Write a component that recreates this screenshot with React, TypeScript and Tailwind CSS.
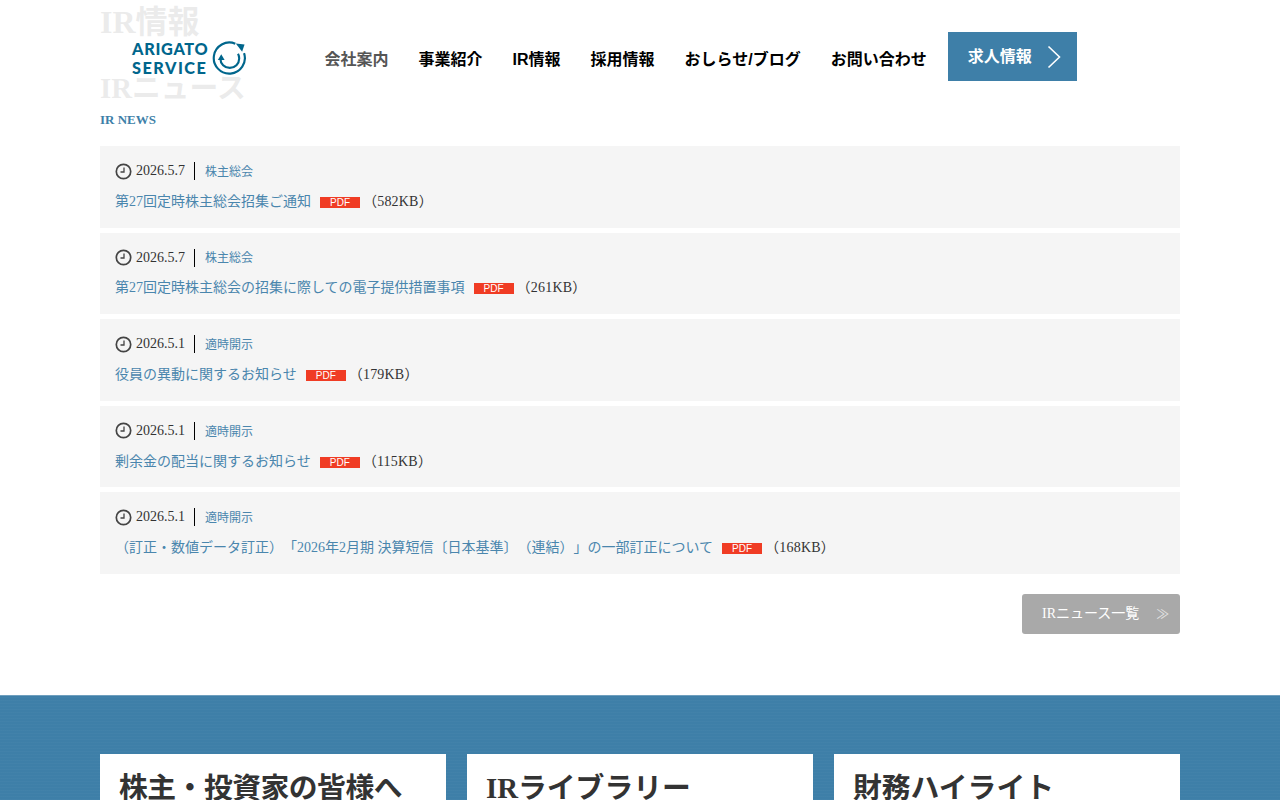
import React from "react";

const serif = "font-['Liberation_Serif','Noto_Sans_CJK_JP',serif]";

const news = [
  { date: "2026.5.7", cat: "株主総会", title: "第27回定時株主総会招集ご通知", size: "582KB" },
  { date: "2026.5.7", cat: "株主総会", title: "第27回定時株主総会の招集に際しての電子提供措置事項", size: "261KB" },
  { date: "2026.5.1", cat: "適時開示", title: "役員の異動に関するお知らせ", size: "179KB" },
  { date: "2026.5.1", cat: "適時開示", title: "剰余金の配当に関するお知らせ", size: "115KB" },
  { date: "2026.5.1", cat: "適時開示", title: "（訂正・数値データ訂正）「2026年2月期 決算短信〔日本基準〕（連結）」の一部訂正について", size: "168KB" },
];

const nav = ["会社案内", "事業紹介", "IR情報", "採用情報", "おしらせ/ブログ", "お問い合わせ"];

function Clock() {
  return (
    <svg width="17" height="17" viewBox="0 0 17 17" fill="none" className="shrink-0">
      <circle cx="8.5" cy="8.5" r="7.2" stroke="#444" strokeWidth="1.7" />
      <path d="M9 4.5V9H5.5" stroke="#444" strokeWidth="1.3" />
    </svg>
  );
}

function Logo() {
  return (
    <div className="flex items-center gap-[5px]">
      <div className="font-['Lato','Noto_Sans',sans-serif] text-[#00668c] text-[16.3px] leading-[19px] font-black tracking-[0.7px] w-[75px] whitespace-nowrap">
        <div>ARIGATO</div>
        <div className="tracking-[1.5px]">SERVICE</div>
      </div>
      <svg width="34" height="35" viewBox="0 0 35 36" fill="none">
        <path d="M24 2.800A16 16 0 1 0 33 12.500" stroke="#00668c" strokeWidth="2.2" />
        <path d="M8.600 18a9.700 9.700 0 0 0 19.400 0c0-2-.4-3.500-1.200-5" stroke="#00668c" strokeWidth="2.2" />
        <path d="M24.500 2.500L33.500 3.500L31 11z" fill="#00668c" />
        <path d="M9.500 13.500L6 19.500h7z" fill="#00668c" />
      </svg>
    </div>
  );
}

function Card({ title, tight }: { title: string; tight?: boolean }) {
  return (
    <div className="bg-white h-[60px] pl-[19px] pt-[14px] overflow-hidden">
      <div className={`text-[28.8px] leading-[40px] font-bold text-[#333] whitespace-nowrap ${tight ? "tracking-[-0.5px]" : ""}`}>{title}</div>
    </div>
  );
}

export default function App() {
  return (
    <div className={`h-[800px] overflow-hidden relative bg-white text-[#333] [text-spacing-trim:space-all] ${serif}`}>
      <header className="absolute top-0 inset-x-0 h-[105px] bg-white/90 flex items-start pl-[132px]">
        <div className="mt-[39px] w-[192.500px] shrink-0">
          <Logo />
        </div>
        <nav className="mt-[32px] flex items-start font-['Liberation_Sans','Noto_Sans_CJK_JP',sans-serif] font-bold text-[16px] text-black">
          <div className="flex gap-[30px] h-[49px] items-center pt-[7px]">
            {nav.map((n, i) => (
              <span key={n} className={i === 0 ? "text-[#555]" : ""}>{n}</span>
            ))}
          </div>
          <div className="ml-[21.500px] w-[129px] h-[49px] bg-[#3e7fa8] text-white flex items-center pl-[19.500px] pt-[1px]">
            <span>求人情報</span>
            <svg width="14" height="24" viewBox="0 0 14 24" fill="none" className="ml-[15.500px]">
              <path d="M1.500 1.500L12.500 12L1.500 22.500" stroke="white" strokeWidth="1.6" />
            </svg>
          </div>
        </nav>
      </header>

      <main className="px-[100px]">
        <h1 className="text-[32px] leading-[44px] font-bold text-[#333]">IR情報</h1>
        <h2 className="mt-[22px] text-[28.8px] leading-[44px] font-bold text-[#333]">IRニュース</h2>
        <p className="text-[13px] leading-[20px] font-bold text-[#3e7fa8]">IR NEWS</p>

        <div className="mt-[16px] flex flex-col gap-[5px]">
          {news.map((n) => (
            <div key={n.title} className="bg-[#f5f5f5] h-[81.6px] px-[15px] pt-[15px]">
              <div className="flex items-center h-[20px]">
                <Clock />
                <span className="ml-[4px] text-[14px] leading-[20px]">{n.date}</span>
                <span className="ml-[9px] mr-[10px] w-px h-[18px] bg-black" />
                <span className="text-[12px] text-[#4a86ad] pt-[1.600px]">{n.cat}</span>
              </div>
              <div className="mt-[10.850px] flex items-center text-[14px] leading-[20px]">
                <span className="text-[#4a86ad]">{n.title}</span>
                <span className="ml-[9px] w-[40px] h-[11px] bg-[#f03c24] text-white text-[10px] leading-[11px] text-center font-['Liberation_Sans',sans-serif] mt-[1px]">PDF</span>
                <span className="ml-[3px] tracking-[0.2px]">（{n.size}）</span>
              </div>
            </div>
          ))}
        </div>

        <div className="mt-[20px] flex justify-end">
          <div className="w-[158px] h-[40px] rounded-[3px] bg-[#a9a9a9] text-white text-[14px] flex items-center pl-[20px]">
            <span>IRニュース一覧</span>
            <span className="ml-[17px] text-[13px] text-[#e4e4e4]">≫</span>
          </div>
        </div>
      </main>

      <footer className="absolute top-[695px] inset-x-0 h-[105px] bg-[#3e7fa8] bg-[repeating-linear-gradient(0deg,rgba(255,255,255,0.018)_0px,rgba(255,255,255,0.018)_1px,transparent_1px,transparent_3px)] border-t border-[#6f9fbe] px-[100px] pt-[58px]">
        <div className="grid grid-cols-3 gap-[21px]">
          <Card title="株主・投資家の皆様へ" tight />
          <Card title="IRライブラリー" />
          <Card title="財務ハイライト" />
        </div>
      </footer>
    </div>
  );
}
